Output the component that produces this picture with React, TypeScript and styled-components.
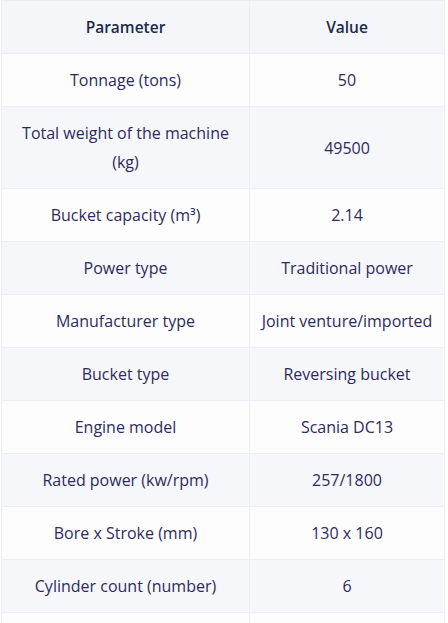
import styled, { createGlobalStyle } from 'styled-components';

const GlobalStyle = createGlobalStyle`
    body {
        margin: 0;
        background: #ffffff;
        font-family: 'Open Sans', 'Noto Sans', sans-serif;
    }
`;

const Wrapper = styled.div`
    padding-left: 1px;
`;

const Table = styled.table`
    width: 444px;
    border-collapse: collapse;
    table-layout: fixed;
    font-size: 16px;
    line-height: 29px;
    text-align: center;

    th,
    td {
        border: 1px solid #eceef3;
        padding: 12px 10px 11px;
    }

    th {
        background-color: #f5f6fa;
        color: #1c2b4b;
        font-weight: 600;
        font-size: 15.5px;
    }

    td {
        color: #2d2b5e;
        font-weight: 400;
    }

    tbody tr:nth-child(odd) td {
        background-color: #fdfdfe;
    }
    tbody tr:nth-child(even) td {
        background-color: #f6f7fb;
    }
`;

const specs: [string, string][] = [
    ['Tonnage (tons)', '50'],
    ['Total weight of the machine (kg)', '49500'],
    ['Bucket capacity (m³)', '2.14'],
    ['Power type', 'Traditional power'],
    ['Manufacturer type', 'Joint venture/imported'],
    ['Bucket type', 'Reversing bucket'],
    ['Engine model', 'Scania DC13'],
    ['Rated power (kw/rpm)', '257/1800'],
    ['Bore x Stroke (mm)', '130 x 160'],
    ['Cylinder count (number)', '6'],
    ['Displacement (L)', '12.7'],
];

const App = () => {
    return (
        <Wrapper>
            <GlobalStyle />
            <Table>
                <colgroup>
                    <col style={{ width: 248 }} />
                    <col />
                </colgroup>
                <thead>
                    <tr>
                        <th>Parameter</th>
                        <th>Value</th>
                    </tr>
                </thead>
                <tbody>
                    {specs.map(([name, value]) => (
                        <tr key={name}>
                            <td>{name}</td>
                            <td>{value}</td>
                        </tr>
                    ))}
                </tbody>
            </Table>
        </Wrapper>
    );
};

export default App;
